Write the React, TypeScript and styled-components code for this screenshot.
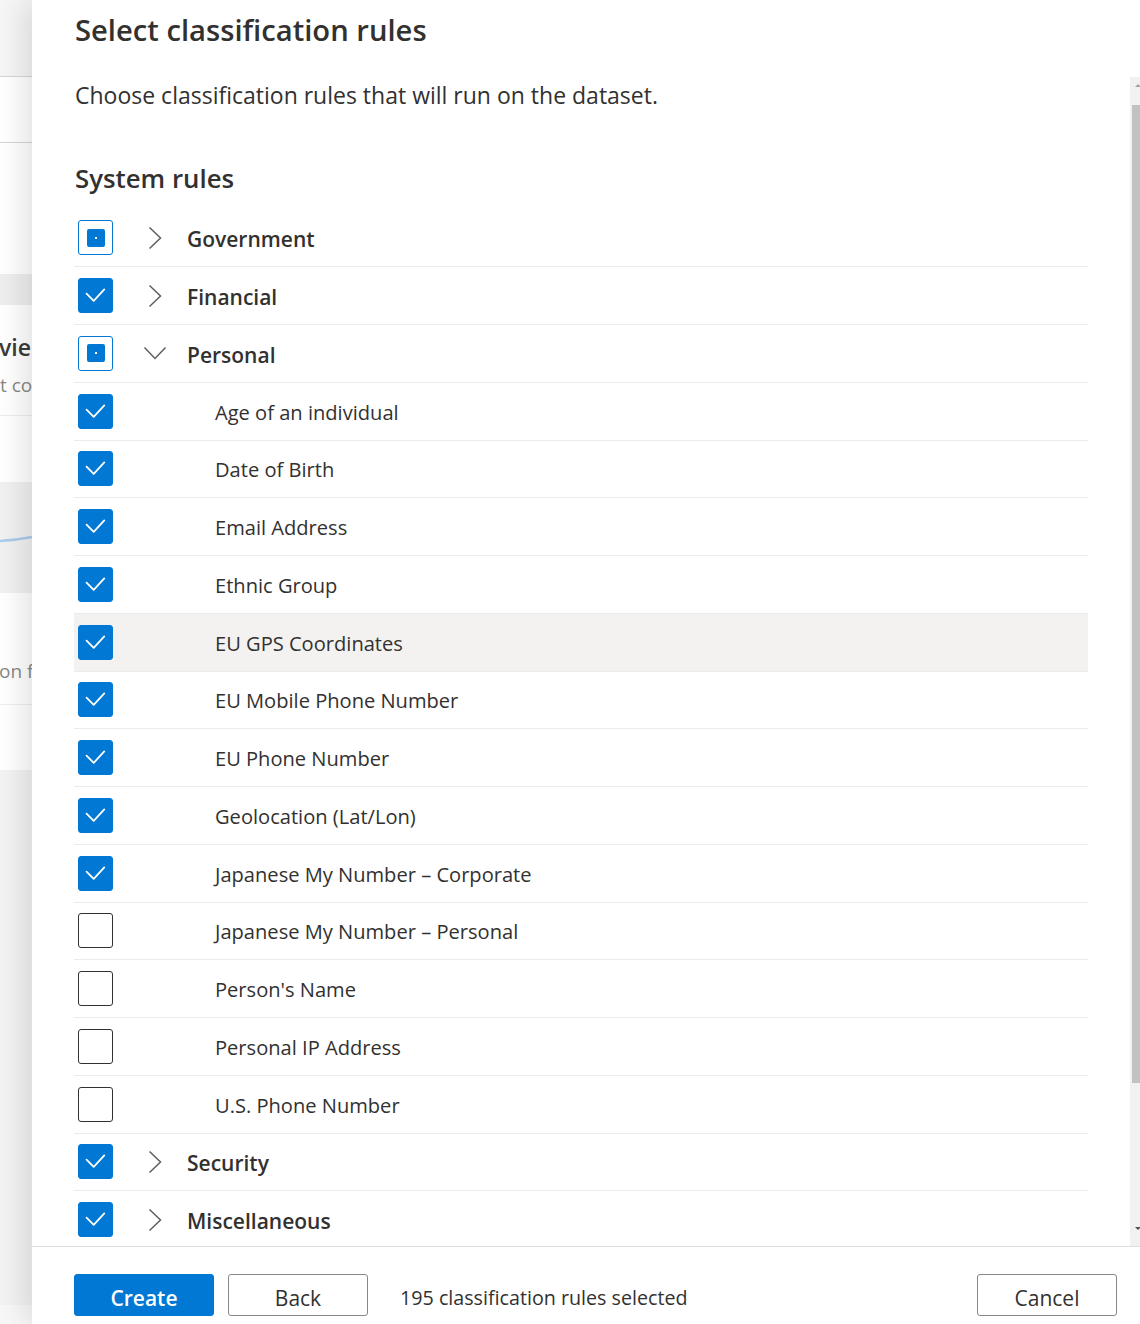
import React from "react";
import styled, { createGlobalStyle } from "styled-components";

const Global = createGlobalStyle`
  html, body { margin: 0; padding: 0; overflow: hidden; background: #ffffff; }
  body { font-family: "Open Sans", "Noto Sans", sans-serif; color: #323130; }
  * { box-sizing: border-box; }
`;

const Page = styled.div`
  display: flex;
  width: 1140px;
  height: 1324px;
  overflow: hidden;
`;

/* ---------- underlying page visible at the left edge ---------- */
const Backdrop = styled.div`
  width: 32px;
  flex: 0 0 32px;
  display: flex;
  flex-direction: column;
  overflow: hidden;
  background: #f3f3f3;
`;

const Band = styled.div<{ $h: number; $bg?: string; $line?: string }>`
  flex: 0 0 ${(p) => p.$h}px;
  height: ${(p) => p.$h}px;
  background: ${(p) => p.$bg || "#ffffff"};
  border-bottom: ${(p) => (p.$line ? `1px solid ${p.$line}` : "none")};
  display: flex;
  flex-direction: column;
  white-space: nowrap;
  overflow: hidden;
`;

const GhostTitle = styled.div`
  font-size: 23px;
  font-weight: 600;
  color: #3b3a39;
  line-height: 32px;
  margin-top: 26px;
  margin-left: -1px;
`;

const GhostText = styled.div<{ $mt: number; $ml: number }>`
  font-size: 19px;
  color: #8a8886;
  line-height: 28px;
  margin-top: ${(p) => p.$mt}px;
  margin-left: ${(p) => p.$ml}px;
`;

const ChartLine = styled.svg`
  display: block;
  margin-top: 52px;
`;

/* ---------- panel ---------- */
const Panel = styled.div`
  position: relative;
  z-index: 1;
  flex: 1;
  display: flex;
  flex-direction: column;
  background: #ffffff;
  box-shadow: -8px 0 28px rgba(0, 0, 0, 0.12);
`;

const Header = styled.div`
  height: 77px;
  flex: 0 0 77px;
  padding: 12px 0 0 43px;
`;

const Title = styled.h1`
  margin: 0;
  font-size: 29.2px;
  line-height: 36px;
  font-weight: 600;
  color: #323130;
`;

const Body = styled.div`
  flex: 1;
  display: flex;
  min-height: 0;
  overflow: hidden;
`;

const Content = styled.div`
  flex: 1;
  padding: 0 42px 0 42px;
  overflow: hidden;
`;

const Subtitle = styled.p`
  margin: 4px 0 0 1px;
  font-size: 23px;
  line-height: 28px;
  color: #323130;
`;

const SectionTitle = styled.h2`
  margin: 53px 0 15.5px 1px;
  font-size: 25.8px;
  line-height: 32px;
  font-weight: 600;
  color: #323130;
`;

const List = styled.div`
  display: flex;
  flex-direction: column;
`;

const Row = styled.div<{ $hover?: boolean }>`
  height: 57.75px;
  flex: 0 0 57.75px;
  display: flex;
  align-items: center;
  border-bottom: 1px solid #edebe9;
  background: ${(p) => (p.$hover ? "#f3f2f1" : "transparent")};
  padding-left: 4px;
`;

const Box = styled.div<{ $state: "checked" | "mixed" | "empty" }>`
  width: 35px;
  height: 35px;
  flex: 0 0 35px;
  border-radius: 3px;
  display: flex;
  align-items: center;
  justify-content: center;
  background: ${(p) => (p.$state === "checked" ? "#0078d4" : "#ffffff")};
  border: 1px solid
    ${(p) => (p.$state === "empty" ? "#323130" : "#0078d4")};
`;

const MixedFill = styled.div`
  width: 18px;
  height: 18px;
  border-radius: 2px;
  background: #0078d4;
  display: flex;
  align-items: center;
  justify-content: center;
  &::after {
    content: "";
    width: 2px;
    height: 2px;
    background: #ffffff;
  }
`;

const Toggle = styled.div`
  width: 52px;
  flex: 0 0 52px;
  margin-left: 16px;
  display: flex;
  align-items: center;
  justify-content: center;
  color: #605e5c;
`;

const GroupLabel = styled.span`
  margin-left: 6px;
  font-size: 21px;
  font-weight: 600;
  color: #323130;
  line-height: 28px;
  padding-top: 3px;
`;

const ItemLabel = styled.span`
  margin-left: 102px;
  font-size: 20.1px;
  color: #323130;
  line-height: 28px;
  padding-top: 3px;
`;

/* ---------- scrollbar ---------- */
const Scrollbar = styled.div`
  width: 10px;
  flex: 0 0 10px;
  background: #f1f1f1;
  display: flex;
  flex-direction: column;
  align-items: flex-end;
`;

const ArrowUp = styled.div`
  margin: 7px -1px 0 0;
  width: 0;
  height: 0;
  border-left: 3px solid transparent;
  border-right: 3px solid transparent;
  border-bottom: 3px solid #a3a3a3;
`;

const Thumb = styled.div`
  width: 8px;
  height: 978px;
  margin-top: 18px;
  background: #c1c1c1;
`;

const ArrowDown = styled.div`
  margin: auto -1px 16px 0;
  width: 0;
  height: 0;
  border-left: 3px solid transparent;
  border-right: 3px solid transparent;
  border-top: 3px solid #505050;
`;

/* ---------- footer ---------- */
const Footer = styled.div`
  height: 78px;
  flex: 0 0 78px;
  border-top: 1px solid #e1dfdd;
  display: flex;
  align-items: flex-start;
  padding: 27px 23px 0 42px;
`;

const Button = styled.button<{ $primary?: boolean }>`
  width: 140px;
  height: 42px;
  border-radius: 3px;
  font-family: inherit;
  font-size: 21px;
  line-height: 26px;
  font-weight: ${(p) => (p.$primary ? 600 : 400)};
  color: ${(p) => (p.$primary ? "#ffffff" : "#323130")};
  background: ${(p) => (p.$primary ? "#0078d4" : "#ffffff")};
  border: 1px solid ${(p) => (p.$primary ? "#0078d4" : "#8a8886")};
  padding: 5px 0 0;
  margin-right: 14px;
  display: flex;
  align-items: center;
  justify-content: center;
  cursor: pointer;
  &:last-child {
    margin-right: 0;
  }
`;

const Status = styled.span`
  margin-left: 18px;
  padding-top: 3px;
  font-size: 19.7px;
  line-height: 42px;
  color: #323130;
`;

const Spacer = styled.div`
  flex: 1;
`;

/* ---------- icons ---------- */
const Check = () => (
  <svg width="35" height="35" viewBox="0 0 35 35" style={{ display: "block" }}>
    <path
      d="M8 15.5 L15.6 23.2 L26.8 11"
      fill="none"
      stroke="#ffffff"
      strokeWidth="1.9"
      strokeLinecap="round"
      strokeLinejoin="round"
    />
  </svg>
);

const ChevronRight = () => (
  <svg width="16" height="24" viewBox="0 0 16 24" style={{ display: "block" }}>
    <path d="M2.5 1.5 L13.5 12 L2.5 22.5" fill="none" stroke="#605e5c" strokeWidth="1.5" />
  </svg>
);

const ChevronDown = () => (
  <svg width="24" height="16" viewBox="0 0 24 16" style={{ display: "block" }}>
    <path d="M1.5 2.5 L12 13.5 L22.5 2.5" fill="none" stroke="#605e5c" strokeWidth="1.5" />
  </svg>
);

type State = "checked" | "mixed" | "empty";

const CheckBox = ({ state }: { state: State }) => (
  <Box $state={state}>
    {state === "checked" && <Check />}
    {state === "mixed" && <MixedFill />}
  </Box>
);

type Item = { label: string; state: State; hover?: boolean };
type Group = { label: string; state: State; open?: boolean; items?: Item[] };

const groups: Group[] = [
  { label: "Government", state: "mixed" },
  { label: "Financial", state: "checked" },
  {
    label: "Personal",
    state: "mixed",
    open: true,
    items: [
      { label: "Age of an individual", state: "checked" },
      { label: "Date of Birth", state: "checked" },
      { label: "Email Address", state: "checked" },
      { label: "Ethnic Group", state: "checked" },
      { label: "EU GPS Coordinates", state: "checked", hover: true },
      { label: "EU Mobile Phone Number", state: "checked" },
      { label: "EU Phone Number", state: "checked" },
      { label: "Geolocation (Lat/Lon)", state: "checked" },
      { label: "Japanese My Number – Corporate", state: "checked" },
      { label: "Japanese My Number – Personal", state: "empty" },
      { label: "Person's Name", state: "empty" },
      { label: "Personal IP Address", state: "empty" },
      { label: "U.S. Phone Number", state: "empty" },
    ],
  },
  { label: "Security", state: "checked" },
  { label: "Miscellaneous", state: "checked" },
  { label: "Custom", state: "empty" },
];

export default function App() {
  return (
    <>
      <Global />
      <Page>
        <Backdrop>
          <Band $h={77} $bg="#f6f6f6" $line="#d6d6d6" />
          <Band $h={66} $line="#d6d6d6" />
          <Band $h={131} />
          <Band $h={31} $bg="#eeeeee" />
          <Band $h={111} $line="#ececec">
            <GhostTitle>vie</GhostTitle>
            <GhostText $mt={8} $ml={0}>
              t co
            </GhostText>
          </Band>
          <Band $h={66} />
          <Band $h={111} $bg="#f1f1f1">
            <ChartLine width="32" height="10" viewBox="0 0 32 10">
              <path d="M0 7 C10 6.5 22 5 32 3" fill="none" stroke="#a9cbec" strokeWidth="2.5" />
            </ChartLine>
          </Band>
          <Band $h={112} $line="#eeeeee">
            <GhostText $mt={64} $ml={-1}>
              on f
            </GhostText>
          </Band>
          <Band $h={65} />
          <Band $h={535} $bg="#f3f3f3" />
          <Band $h={19} $bg="#f8f8f8" />
        </Backdrop>
        <Panel>
          <Header>
            <Title>Select classification rules</Title>
          </Header>
          <Body>
            <Content>
              <Subtitle>Choose classification rules that will run on the dataset.</Subtitle>
              <SectionTitle>System rules</SectionTitle>
              <List>
                {groups.map((g) => (
                  <React.Fragment key={g.label}>
                    <Row>
                      <CheckBox state={g.state} />
                      <Toggle>{g.open ? <ChevronDown /> : <ChevronRight />}</Toggle>
                      <GroupLabel>{g.label}</GroupLabel>
                    </Row>
                    {g.open &&
                      g.items?.map((it) => (
                        <Row key={it.label} $hover={it.hover}>
                          <CheckBox state={it.state} />
                          <ItemLabel>{it.label}</ItemLabel>
                        </Row>
                      ))}
                  </React.Fragment>
                ))}
              </List>
            </Content>
            <Scrollbar>
              <ArrowUp />
              <Thumb />
              <ArrowDown />
            </Scrollbar>
          </Body>
          <Footer>
            <Button $primary>Create</Button>
            <Button>Back</Button>
            <Status>195 classification rules selected</Status>
            <Spacer />
            <Button>Cancel</Button>
          </Footer>
        </Panel>
      </Page>
    </>
  );
}
